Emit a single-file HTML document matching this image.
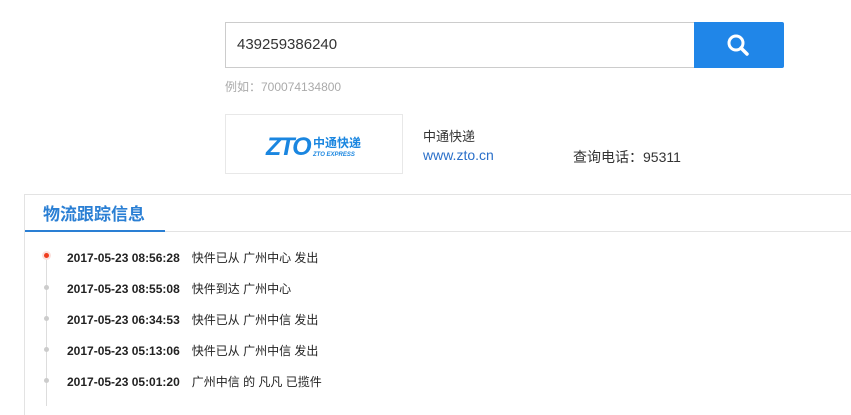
<!DOCTYPE html>
<html><head><meta charset="utf-8"><style>
body{margin:0;width:851px;height:406px;background:#fff;font-family:"Liberation Sans","Noto Sans CJK SC",sans-serif;position:relative;overflow:hidden;color:#333}
.a{position:absolute}
.inp{left:225px;top:22px;border:1px solid #ccc;border-right:none;font-size:15px;line-height:44px;padding-left:11px;box-sizing:border-box;width:469px;height:46px}
.btn{left:694px;top:22px;width:90px;height:46px;background:#2086e8;border-radius:0 2px 2px 0}
.hint{left:225px;top:78px;font-size:12px;color:#aaa}
.logo{left:225px;top:114px;width:176px;height:58px;border:1px solid #e8e8e8}
.box{left:24px;top:194px;width:840px;height:220px;border-top:1px solid #e3e3e3;border-left:1px solid #e3e3e3}
.tl{left:25px;top:231px;width:826px;border-top:1px solid #e3e3e3}
.tab{left:25px;top:230px;width:140px;border-top:2px solid #2a7fd4}
.title{left:43px;top:200px;font-size:17px;font-weight:bold;color:#2a7fd4}
.line{left:46px;top:256px;width:1px;height:150px;background:#ddd}
.row{left:67px;font-size:12px;color:#222}
.row b{margin-right:12px}
.dot{left:44px;width:5px;height:5px;border-radius:50%;background:#ccc}
</style></head><body>
<div class="a inp">439259386240</div>
<div class="a btn"><svg width="90" height="46"><circle cx="42" cy="21" r="7" fill="none" stroke="#fff" stroke-width="3"/><line x1="47" y1="26" x2="53" y2="32" stroke="#fff" stroke-width="3.5" stroke-linecap="round"/></svg></div>
<div class="a hint">例如：700074134800</div>
<div class="a logo"><svg width="176" height="58"><text x="40" y="40" font-family="Liberation Sans" font-style="italic" font-weight="bold" font-size="25" fill="#1a86e0" letter-spacing="-2">ZTO</text><text x="87" y="32" font-size="12" font-weight="bold" fill="#1a86e0" font-family="Noto Sans CJK SC">中通快递</text><text x="87" y="41" font-size="6" font-weight="bold" font-style="italic" fill="#1a86e0">ZTO EXPRESS</text></svg></div>
<div class="a" style="left:423px;top:126px;font-size:13px">中通快递</div>
<div class="a" style="left:423px;top:147px;font-size:14px;color:#2a6fc9">www.zto.cn</div>
<div class="a" style="left:573px;top:147px;font-size:14px">查询电话：95311</div>
<div class="a box"></div>
<div class="a tl"></div>
<div class="a tab"></div>
<div class="a title">物流跟踪信息</div>
<div class="a line"></div>
<div class="a" style="left:42px;top:251px;width:9px;height:9px;border-radius:50%;background:#fbe0dc"></div>
<div class="a" style="left:44px;top:253px;width:5px;height:5px;border-radius:50%;background:#f03c1e"></div>
<div class="a dot" style="top:285px"></div>
<div class="a dot" style="top:316px"></div>
<div class="a dot" style="top:347px"></div>
<div class="a dot" style="top:378px"></div>
<div class="a row" style="top:249px"><b>2017-05-23 08:56:28</b>快件已从 广州中心 发出</div>
<div class="a row" style="top:280px"><b>2017-05-23 08:55:08</b>快件到达 广州中心</div>
<div class="a row" style="top:311px"><b>2017-05-23 06:34:53</b>快件已从 广州中信 发出</div>
<div class="a row" style="top:342px"><b>2017-05-23 05:13:06</b>快件已从 广州中信 发出</div>
<div class="a row" style="top:373px"><b>2017-05-23 05:01:20</b>广州中信 的 凡凡 已揽件</div>
</body></html>
